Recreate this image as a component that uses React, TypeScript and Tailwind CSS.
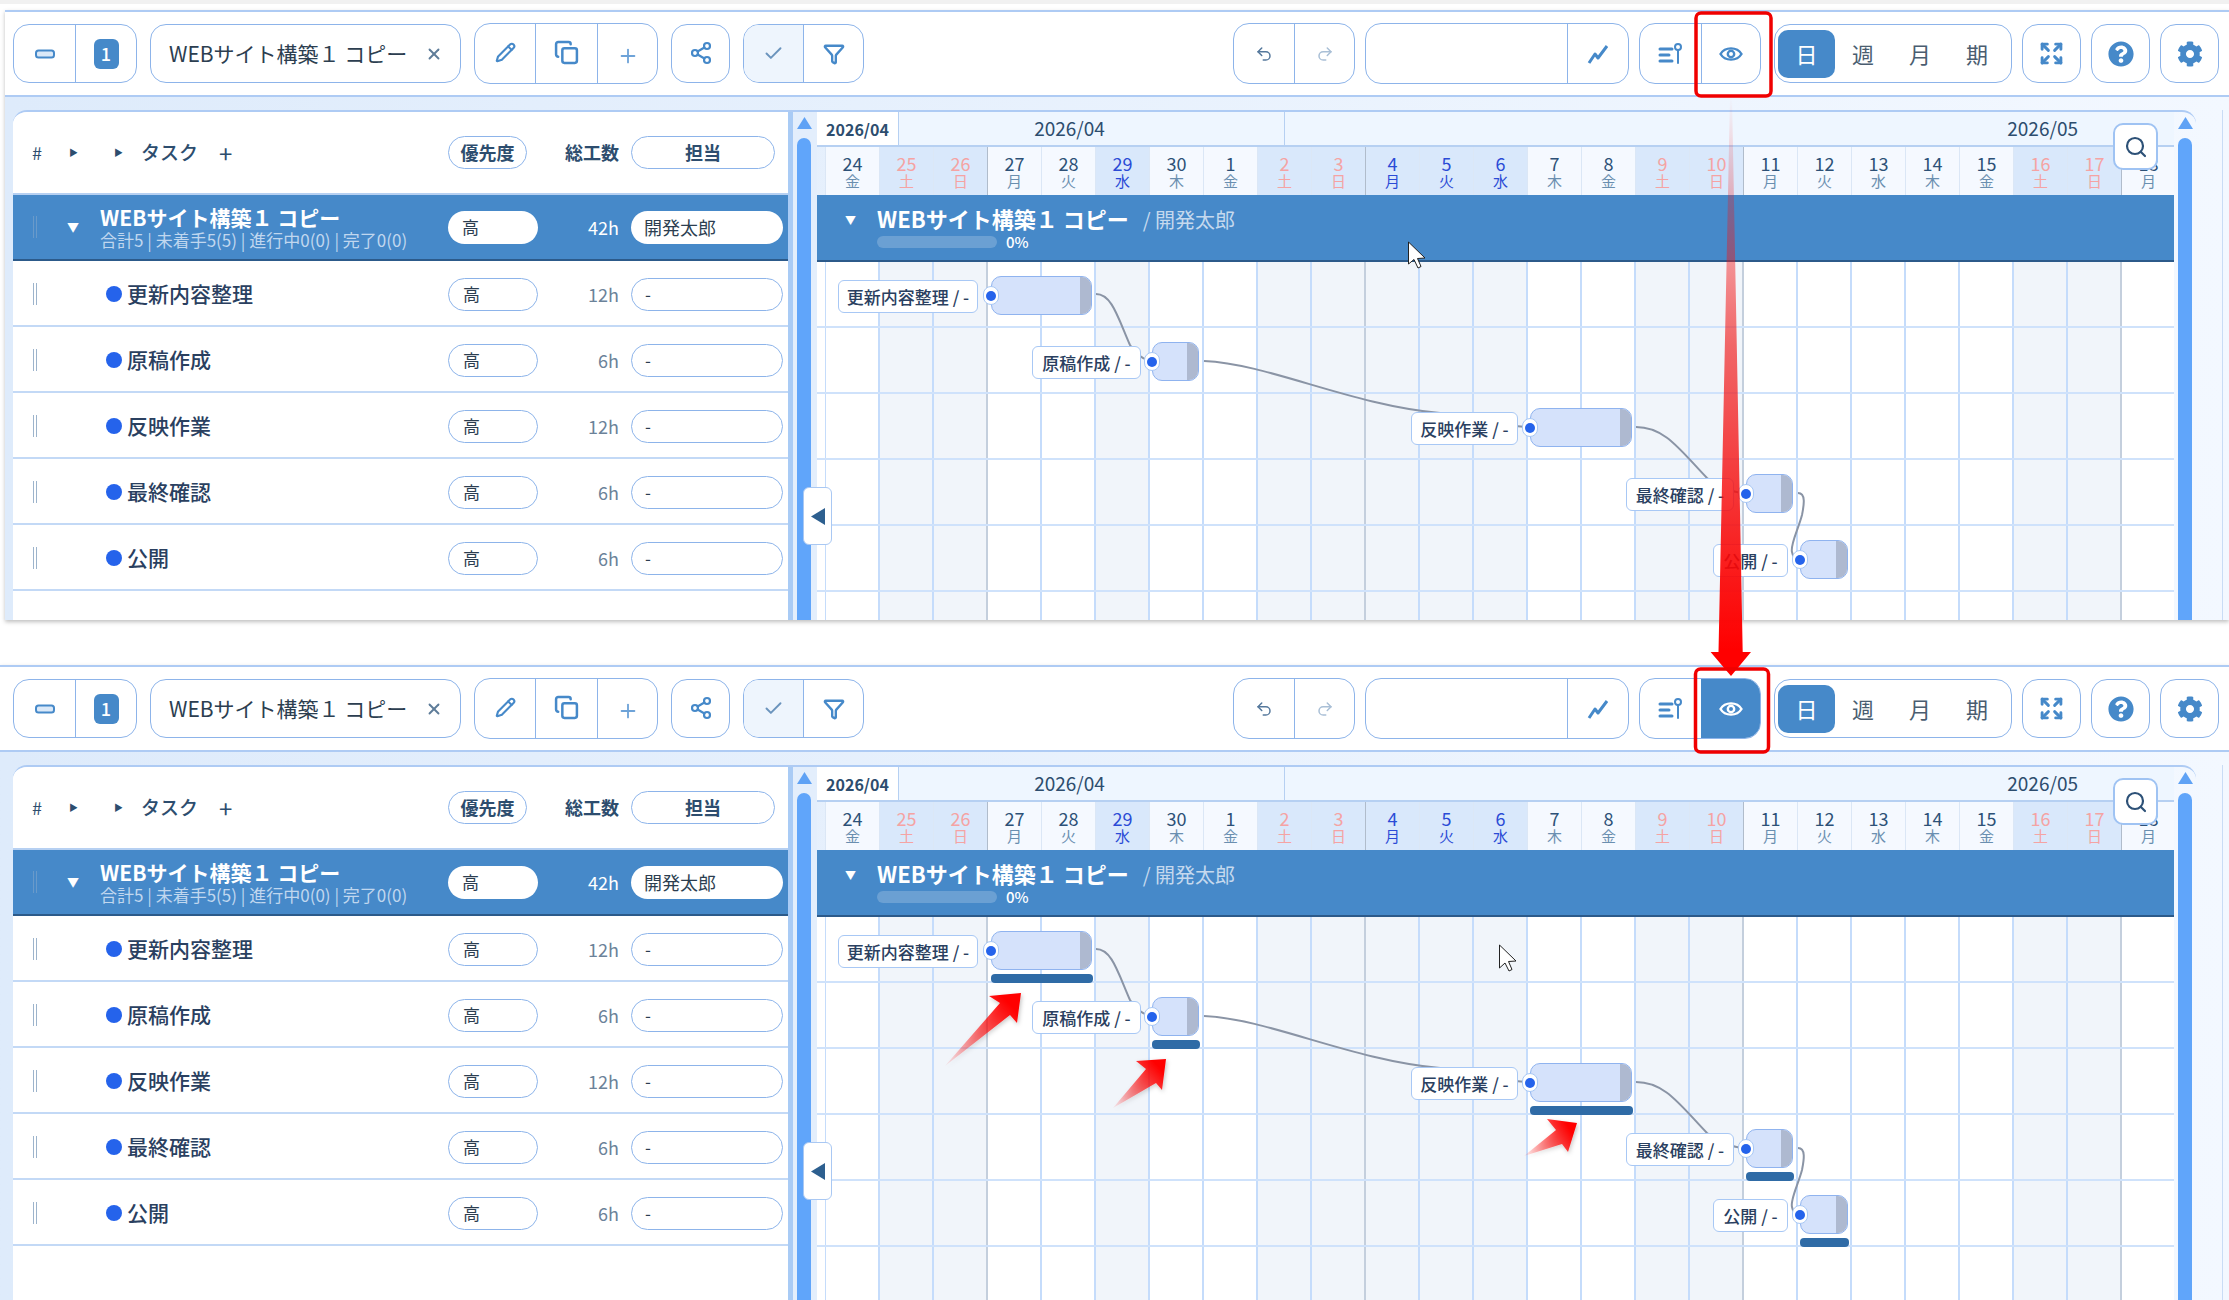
import { Check, Copy, Expand, Filter, Pencil, Plus, Redo2, Search, Share2, Undo2, X } from "lucide-react";
import { FaCog, FaQuestionCircle } from "react-icons/fa";

const days = [
  { d: "24", w: "金", t: "n" }, { d: "25", w: "土", t: "r" }, { d: "26", w: "日", t: "r" }, { d: "27", w: "月", t: "n", mon: true },
  { d: "28", w: "火", t: "n" }, { d: "29", w: "水", t: "h" }, { d: "30", w: "木", t: "n" }, { d: "1", w: "金", t: "n" },
  { d: "2", w: "土", t: "r" }, { d: "3", w: "日", t: "r" }, { d: "4", w: "月", t: "h", mon: true }, { d: "5", w: "火", t: "h" },
  { d: "6", w: "水", t: "h" }, { d: "7", w: "木", t: "n" }, { d: "8", w: "金", t: "n" }, { d: "9", w: "土", t: "r" },
  { d: "10", w: "日", t: "r" }, { d: "11", w: "月", t: "n", mon: true }, { d: "12", w: "火", t: "n" }, { d: "13", w: "水", t: "n" },
  { d: "14", w: "木", t: "n" }, { d: "15", w: "金", t: "n" }, { d: "16", w: "土", t: "r" }, { d: "17", w: "日", t: "r" },
  { d: "18", w: "月", t: "n", mon: true },
];

const tasks = [
  { name: "更新内容整理", hours: "12h", y: 276, barX: 991, barW: 101, labelX: 838, labelW: 140 },
  { name: "原稿作成", hours: "6h", y: 342, barX: 1152, barW: 47, labelX: 1032, labelW: 109 },
  { name: "反映作業", hours: "12h", y: 408, barX: 1530, barW: 102, labelX: 1411, labelW: 107 },
  { name: "最終確認", hours: "6h", y: 474, barX: 1746, barW: 47, labelX: 1626, labelW: 108 },
  { name: "公開", hours: "6h", y: 540, barX: 1800, barW: 48, labelX: 1713, labelW: 75 },
];

const links = [
  "M1096 294 C1112 294 1118 318 1130 345 C1134 352 1140 358 1150 361",
  "M1204 361 C1270 364 1350 405 1440 413 C1470 418 1500 426 1528 427",
  "M1636 427 C1665 427 1680 450 1707 478 C1720 488 1735 493 1745 493",
  "M1798 493 C1806 493 1804 505 1802 515 C1798 530 1790 545 1792 552 C1793 558 1796 560 1800 560",
];

function Cell({ className = "", children }: { className?: string; children?: React.ReactNode }) {
  return <div className={`flex items-center justify-center ${className}`}>{children}</div>;
}

function Group({ className = "", children }: { className?: string; children?: React.ReactNode }) {
  return <div className={`flex overflow-hidden rounded-[16px] border border-[#8db4ea] bg-white ${className}`}>{children}</div>;
}

function Grip() {
  return (
    <div className="flex gap-[2px]">
      <span className="h-[22px] w-px bg-[#9db4cc]" />
      <span className="h-[22px] w-px bg-[#9db4cc]" />
    </div>
  );
}

function Toolbar({ active, offset }: { active: boolean; offset: boolean }) {
  return (
    <div className={`flex h-[87px] shrink-0 items-center border-y-2 border-[#aecbf4] bg-white ${offset ? "pl-[8px]" : "pl-[13px]"}`}>
      <Group className="h-[59px] w-[124px]">
        <Cell className="w-[62px] border-r border-[#8db4ea]">
          <svg width="20" height="10" viewBox="0 0 20 10"><rect x="1" y="1.5" width="18" height="7" rx="2.5" fill="#dbe9f8" stroke="#4689c9" strokeWidth="2" /></svg>
        </Cell>
        <Cell className="flex-1">
          <span className="flex h-[30px] w-[25px] items-center justify-center rounded-[6px] bg-[#4689c9] text-[18px] font-medium text-white">1</span>
        </Cell>
      </Group>
      <Group className="ml-[13px] h-[59px] w-[311px] items-center pl-[18px] pr-[17px]">
        <span className="text-[21px] whitespace-nowrap text-[#2c3e50]">WEBサイト構築１ コピー</span>
        <X className="ml-auto text-[#5e7c99]" size={18} strokeWidth={2.5} />
      </Group>
      <Group className="ml-[13px] h-[61px] w-[184px]">
        <Cell className="w-[61px] border-r border-[#8db4ea] pb-[3px]"><Pencil size={21} color="#4689c9" strokeWidth={2.4} /></Cell>
        <Cell className="w-[62px] border-r border-[#8db4ea] pb-[2px]"><Copy size={25} color="#4689c9" strokeWidth={2.4} /></Cell>
        <Cell className="flex-1 pt-[4px]"><Plus size={22} color="#6ea3d8" strokeWidth={2} /></Cell>
      </Group>
      <Group className="ml-[13px] h-[59px] w-[59px]">
        <Cell className="flex-1 pb-[2px]"><Share2 size={24} color="#4689c9" strokeWidth={2.2} /></Cell>
      </Group>
      <Group className="ml-[13px] h-[59px] w-[121px]">
        <Cell className="w-[60px] border-r border-[#8db4ea] bg-[#eef5fd]"><Check size={21} color="#6b94bd" strokeWidth={2.2} /></Cell>
        <Cell className="flex-1"><Filter size={22} color="#4689c9" strokeWidth={2.6} /></Cell>
      </Group>
      <div className="ml-auto flex items-center gap-[10px] pr-[10px]">
        <Group className="h-[61px] w-[122px]">
          <Cell className="w-[61px] border-r border-[#8db4ea]"><Undo2 size={18} color="#55789c" strokeWidth={2} /></Cell>
          <Cell className="flex-1"><Redo2 size={18} color="#a9bfd6" strokeWidth={2} /></Cell>
        </Group>
        <Group className="h-[61px] w-[264px]">
          <div className="w-[202px] border-r border-[#8db4ea]" />
          <Cell className="flex-1">
            <svg width="24" height="24" viewBox="0 0 24 24" fill="none" stroke="#4689c9" strokeWidth="3" strokeLinejoin="round"><path d="M3 21 L9 12 L12 16 L21 4" /></svg>
          </Cell>
        </Group>
        <Group className="h-[61px] w-[122px]">
          <Cell className="w-[61px]">
            <svg width="28" height="28" viewBox="0 0 28 28" fill="none" stroke="#4689c9" strokeWidth="3" strokeLinecap="round">
              <path d="M3 9h12M3 15h9M3 21h12" />
              <circle cx="21" cy="7" r="3" strokeWidth="2" />
              <path d="M21 10v13" strokeWidth="2" />
            </svg>
          </Cell>
          <Cell className={`flex-1 ${active ? "bg-[#4689c9]" : "border-l border-[#8db4ea]"}`}>
            <svg width="24" height="18" viewBox="0 0 24 18" fill="none" stroke={active ? "#ffffff" : "#4689c9"} strokeWidth="2.4">
              <path d="M1.5 9 C6 1.5 18 1.5 22.5 9 C18 16.5 6 16.5 1.5 9 Z" />
              <circle cx="12" cy="9" r="3.2" />
            </svg>
          </Cell>
        </Group>
        <Group className="ml-[3px] h-[59px] w-[238px] items-center px-[3px] text-[22px] text-[#4a5d70]">
          <span className="flex h-[48px] w-[57px] items-center justify-center rounded-[10px] bg-[#4689c9] text-white">日</span>
          <span className="w-[56px] text-center">週</span>
          <span className="w-[58px] text-center">月</span>
          <span className="w-[56px] text-center">期</span>
        </Group>
        <Group className="h-[59px] w-[59px]"><Cell className="flex-1"><Expand size={25} color="#4689c9" strokeWidth={2.8} /></Cell></Group>
        <Group className="h-[59px] w-[59px]"><Cell className="flex-1"><FaQuestionCircle size={26} color="#4689c9" /></Cell></Group>
        <Group className="h-[59px] w-[59px]"><Cell className="flex-1"><FaCog size={26} color="#4689c9" /></Cell></Group>
      </div>
    </div>
  );
}

function TaskTable() {
  return (
    <div className="flex w-[775px] shrink-0 flex-col bg-white">
      <div className="flex h-[83px] shrink-0 items-center border-b-2 border-[#b6d0f2] text-[18px] font-bold text-[#2d4d6e]">
        <div className="flex w-[435px] items-center">
          <span className="ml-[19px] w-[37px] text-[18px] font-normal">#</span>
          <span className="w-[45px] text-[9px]">▶</span>
          <span className="w-[27px] text-[9px]">▶</span>
          <span className="w-[78px] text-[19px] font-medium">タスク</span>
          <span className="text-[24px] font-normal">+</span>
        </div>
        <span className="flex h-[33px] w-[79px] items-center justify-center rounded-full border border-[#8db4ea]">優先度</span>
        <span className="w-[92px] text-right">総工数</span>
        <span className="ml-[12px] flex h-[33px] w-[144px] items-center justify-center rounded-full border border-[#8db4ea]">担当</span>
      </div>
      <div className="flex h-[66px] shrink-0 items-center border-b-2 border-[#2c5a8a] bg-[#4689c9] text-white">
        <div className="flex w-[87px] items-center pl-[20px]">
          <div className="opacity-40"><Grip /></div>
          <span className="ml-[30px] text-[12px]">▼</span>
        </div>
        <div className="flex w-[348px] flex-col leading-none">
          <span className="text-[21px] font-bold whitespace-nowrap">WEBサイト構築１ コピー</span>
          <span className="mt-[3px] text-[17px] whitespace-nowrap text-[#c0d7ef]">合計5 | 未着手5(5) | 進行中0(0) | 完了0(0)</span>
        </div>
        <span className="flex h-[33px] w-[90px] items-center rounded-full bg-white pl-[14px] text-[17px] text-[#2c3e50]">高</span>
        <span className="w-[81px] text-right text-[18px]">42h</span>
        <span className="ml-[12px] flex h-[33px] w-[152px] items-center rounded-full bg-white pl-[13px] text-[18px] text-[#2c3e50]">開発太郎</span>
      </div>
      {tasks.map((t) => (
        <div key={t.name} className="flex h-[66px] shrink-0 items-center border-b-2 border-[#c3d9f6] pt-[2px]">
          <div className="w-[87px] pl-[20px]"><Grip /></div>
          <div className="flex w-[348px] items-center gap-[5px] pl-[6px]">
            <span className="h-[16px] w-[16px] rounded-full bg-[#2563eb]" />
            <span className="text-[21px] font-medium text-[#2a4060]">{t.name}</span>
          </div>
          <span className="flex h-[33px] w-[90px] items-center rounded-full border border-[#8db4ea] pl-[14px] text-[17px] text-[#2c3e50]">高</span>
          <span className="w-[81px] text-right text-[18px] text-[#6b8299]">{t.hours}</span>
          <span className="ml-[12px] flex h-[33px] w-[152px] items-center rounded-full border border-[#8db4ea] pl-[13px] text-[17px] text-[#2c3e50]">-</span>
        </div>
      ))}
    </div>
  );
}

function ScrollStrip({ className = "" }: { className?: string }) {
  return (
    <div className={`flex shrink-0 flex-col items-center pt-[5px] ${className}`}>
      <svg className="shrink-0" width="15" height="12" viewBox="0 0 15 12"><path d="M7.5 0 L15 12 H0 Z" fill="#5fa2f5" /></svg>
      <div className="mt-[9px] w-[14px] flex-1 rounded-t-full bg-[#60a5fa]" />
    </div>
  );
}

function Splitter() {
  return (
    <div className="relative flex w-[29px] shrink-0 bg-[#e3eefc]">
      <div className="w-[5px] bg-[#a9cbf5]" />
      <ScrollStrip className="ml-[4px] w-[14px]" />
      <div className="absolute top-[375px] left-[15px] z-20 flex h-[58px] w-[29px] items-center justify-center rounded-[6px] border border-[#a9c8f3] bg-white">
        <svg width="14" height="17" viewBox="0 0 14 17"><path d="M14 0 V17 L0 8.5 Z" fill="#2d5f8f" /></svg>
      </div>
    </div>
  );
}

function Timeline({ showBaseline }: { showBaseline: boolean }) {
  return (
    <div className="relative flex w-[1357px] shrink-0 flex-col overflow-hidden">
      {/* month row */}
      <div className="flex h-[35px] shrink-0 items-center border-b-2 border-[#b6d0f2] bg-[#eef6ff] text-[#2d4d6e]">
        <div className="flex h-full w-[82px] items-center justify-center border-r border-[#b6d0f2] bg-white text-[16px] font-bold">2026/04</div>
        <div className="flex h-full w-[386px] items-center justify-center border-r border-[#b6d0f2] pr-[44px] text-[19px]">2026/04</div>
        <div className="flex-1 pr-[96px] text-right text-[19px]">2026/05</div>
      </div>
      {/* day row */}
      <div className="flex h-[48px] shrink-0 pl-[8px]">
        {days.map((c) => (
          <div
            key={c.d}
            className={`flex w-[54px] shrink-0 flex-col items-center justify-center border-l pt-[1px] leading-[17px] ${c.mon ? "border-[#b0bccb]" : "border-[#dbe7f6]"} ${c.t === "n" ? "bg-[#f5f9ff]" : "bg-[#d9e8fb]"}`}
          >
            <span className={`text-[18px] ${c.t === "r" ? "text-[#f5a3a3]" : c.t === "h" ? "text-[#2b4bd6]" : "text-[#2d5177]"}`}>{c.d}</span>
            <span className={`text-[15px] ${c.t === "r" ? "text-[#f5a3a3]" : c.t === "h" ? "text-[#2b4bd6]" : "text-[#6a8fb0]"}`}>{c.w}</span>
          </div>
        ))}
      </div>
      {/* project row */}
      <div className="flex h-[67px] shrink-0 items-center border-b-2 border-[#2c5a8a] bg-[#4689c9] pb-[2px] pl-[28px] text-white">
        <span className="mb-[12px] text-[11px]">▼</span>
        <div className="ml-[21px] flex flex-col">
          <div className="flex items-baseline gap-[14px] leading-[28px] whitespace-nowrap">
            <span className="text-[22px] font-bold">WEBサイト構築１ コピー</span>
            <span className="text-[20px] text-[#c5d9ee]">/ 開発太郎</span>
          </div>
          <div className="flex items-center gap-[9px] leading-none">
            <span className="h-[12px] w-[120px] rounded-full bg-white/20" />
            <span className="text-[15px] font-medium">0%</span>
          </div>
        </div>
      </div>
      {/* body */}
      <div className="relative flex-1 overflow-hidden bg-white">
        <div className="absolute inset-0 flex pl-[8px]">
          <div className="w-0 border-l border-[#c5dcfb]" />
          {days.map((c, i) => (
            <div
              key={c.d}
              className={`w-[54px] shrink-0 border-r-2 ${c.t === "n" ? "" : "bg-[#f1f5fa]"} ${days[i + 1]?.mon ? "border-[#c4cfdd]" : "border-[#c5dcfb]"}`}
            />
          ))}
        </div>
        <div className="absolute inset-0 flex flex-col">
          {[0, 1, 2, 3, 4, 5].map((i) => (
            <div key={i} className="h-[66px] shrink-0 border-b-2 border-[#cfe2fb]" />
          ))}
        </div>
        <svg className="absolute top-0 left-0" width="1357" height="400" viewBox="817 262 1357 400" fill="none" stroke="#8a94a5" strokeWidth="2">
          {links.map((d) => (
            <path key={d} d={d} />
          ))}
        </svg>
        {tasks.map((t) => (
          <div key={t.name}>
            <div
              className="absolute flex h-[33px] items-center justify-center rounded-[6px] border border-[#a8c8f5] bg-white text-[17px] font-medium whitespace-nowrap text-[#2a4060]"
              style={{ left: t.labelX - 817, top: t.y + 4 - 262, width: t.labelW }}
            >
              {t.name} / -
            </div>
            <div
              className="absolute flex h-[39px] justify-end overflow-hidden rounded-[10px] border border-[#8fb3ef] bg-[#d5e2fb]"
              style={{ left: t.barX - 817, top: t.y - 262, width: t.barW }}
            >
              <div className="w-[11px] bg-[#aeb9d0]" />
            </div>
            <div
              className="absolute flex h-[19px] w-[16px] items-center justify-center rounded-full border border-[#a8c8f5] bg-white"
              style={{ left: t.barX - 8 - 817, top: t.y + 10 - 262 }}
            >
              <span className="h-[10px] w-[10px] rounded-full bg-[#2563eb]" />
            </div>
            {showBaseline && (
              <div
                className="absolute h-[9px] rounded-[4px] bg-[#2f6ba6]"
                style={{ left: t.barX - 817, top: t.y + 43 - 262, width: t.barW + 1 }}
              />
            )}
          </div>
        ))}
      </div>
      <div className="absolute top-[11px] right-[16px] z-10 flex h-[47px] w-[45px] items-center justify-center rounded-[10px] border-2 border-[#9fc3f3] bg-white">
        <Search size={24} color="#2d5177" strokeWidth={2.2} />
      </div>
    </div>
  );
}

function Shot({ second }: { second: boolean }) {
  return (
    <div className={`flex flex-col shadow-[0_2px_4px_rgba(0,0,0,0.25)] ${second ? "h-[635px]" : "ml-[5px] h-[610px]"}`}>
      <Toolbar active={second} offset={!second} />
      <div className={`flex min-h-0 flex-1 bg-gradient-to-r from-[#deebfb] to-[#f3f8ff] pt-[13px] ${second ? "pl-[13px]" : "pl-[8px]"}`}>
        <div className="flex w-[2183px] shrink-0 overflow-hidden rounded-t-[14px] border-t-2 border-[#aecbf4]">
          <TaskTable />
          <Splitter />
          <Timeline showBaseline={second} />
          <ScrollStrip className="w-[22px]" />
        </div>
        <div className="ml-[26px] w-px bg-[#c9dcf5]" />
      </div>
    </div>
  );
}

export default function App() {
  return (
    <div className="relative h-[1300px] w-[2229px] overflow-hidden bg-white font-['Noto_Sans_CJK_JP','Noto_Sans',sans-serif]">
      <div className="h-[4px] bg-[#f1f1f1]" />
      <div className="h-[6px]" />
      <Shot second={false} />
      <div className="h-[45px]" />
      <Shot second />
      <svg className="absolute top-0 left-0 z-30" width="2229" height="1300" viewBox="0 0 2229 1300">
        <defs>
          <linearGradient id="big" gradientUnits="userSpaceOnUse" x1="1731" y1="97" x2="1731" y2="650">
            <stop offset="0" stopColor="#ff0000" stopOpacity="0" />
            <stop offset="0.45" stopColor="#f01818" stopOpacity="0.65" />
            <stop offset="0.8" stopColor="#f80808" stopOpacity="0.88" />
            <stop offset="1" stopColor="#ff0000" />
          </linearGradient>
          <linearGradient id="a1" gradientUnits="userSpaceOnUse" x1="945" y1="1066" x2="1021" y2="993">
            <stop offset="0" stopColor="#ff0000" stopOpacity="0.05" />
            <stop offset="0.85" stopColor="#ff0000" />
          </linearGradient>
          <linearGradient id="a2" gradientUnits="userSpaceOnUse" x1="1113" y1="1108" x2="1166" y2="1059">
            <stop offset="0" stopColor="#ff0000" stopOpacity="0.05" />
            <stop offset="0.85" stopColor="#ff0000" />
          </linearGradient>
          <linearGradient id="a3" gradientUnits="userSpaceOnUse" x1="1524" y1="1156" x2="1577" y2="1123">
            <stop offset="0" stopColor="#ff0000" stopOpacity="0.05" />
            <stop offset="0.85" stopColor="#ff0000" />
          </linearGradient>
          <filter id="soft" x="-30%" y="-30%" width="160%" height="160%">
            <feDropShadow dx="1" dy="2" stdDeviation="2" floodColor="#000000" floodOpacity="0.25" />
          </filter>
        </defs>
        <polygon points="1730,97 1732,97 1742.7,652 1751,652 1731,676 1710.6,652 1718.5,652" fill="url(#big)" />
        <polygon points="1021,993 1017,1023 1010,1015 945,1066 1000,1003 989,996" fill="url(#a1)" filter="url(#soft)" />
        <polygon points="1166,1059 1162,1090 1156,1083 1113,1108 1146,1069 1136,1061" fill="url(#a2)" filter="url(#soft)" />
        <polygon points="1577,1123 1568,1152 1562,1144 1524,1156 1556,1130 1547,1119" fill="url(#a3)" filter="url(#soft)" />
        <rect x="1696" y="13" width="75" height="83" rx="5" fill="none" stroke="#f00000" strokeWidth="3.5" />
        <rect x="1695.5" y="669" width="73" height="83" rx="5" fill="none" stroke="#f00000" strokeWidth="3.5" />
        <path d="M1408.5 242 L1408.5 264 L1414 259.5 L1418 268 L1421 266.5 L1417.5 258.5 L1425 258 Z" fill="#ffffff" stroke="#222222" strokeWidth="1" />
        <path d="M1499.5 945 L1499.5 968 L1505 963 L1509 971 L1512 969.5 L1508.5 961.5 L1516 961 Z" fill="#ffffff" stroke="#222222" strokeWidth="1" />
      </svg>
    </div>
  );
}
